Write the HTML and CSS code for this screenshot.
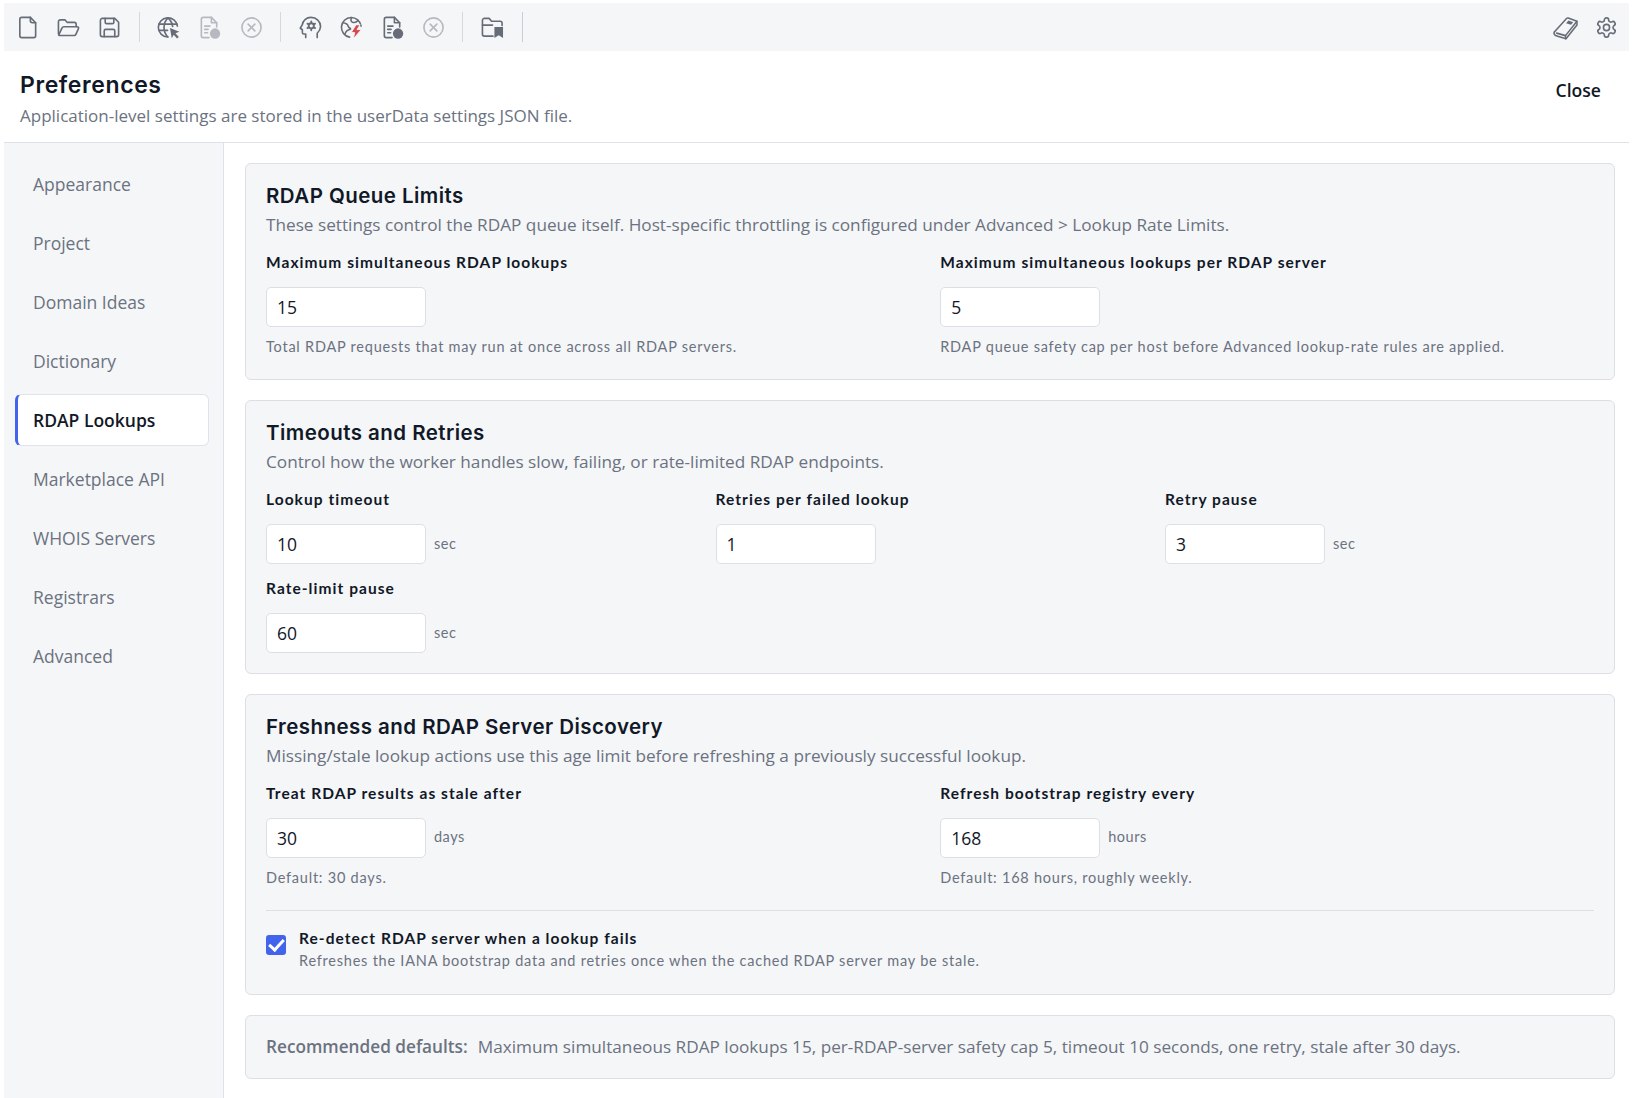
FILE: index.html
```html
<!DOCTYPE html>
<html lang="en">
<head>
<meta charset="utf-8">
<title>Preferences</title>
<link rel="stylesheet" href="styles.css">
</head>
<body>
<div class="app">
  <header class="toolbar">
    <div class="tool-btn"><svg viewBox="0 0 24 24" class="ico"><path d="M6 1.500h9l5.500 5.500v13.500a2 2 0 0 1-2 2H6a2 2 0 0 1-2-2v-17a2 2 0 0 1 2-2z"/><path d="M15 1.500V5a2 2 0 0 0 2 2h3.500"/></svg></div>
    <div class="tool-btn"><svg viewBox="0 0 24 24" class="ico"><path d="M1.500 18.500V6a2 2 0 0 1 2-2h4.700l2.300 2.600h7.500a2 2 0 0 1 2 2V11"/><path d="M1.700 20l3.600-7.700a2 2 0 0 1 1.800-1.100h14c1 0 1.700 1 1.300 1.900l-2.700 6a2 2 0 0 1-1.800 1.200H3.500a2 2 0 0 1-1.800-.3z"/></svg></div>
    <div class="tool-btn"><svg viewBox="0 0 24 24" class="ico"><path d="M4.500 2.500h13l4 4v13a2 2 0 0 1-2 2h-15a2 2 0 0 1-2-2v-15a2 2 0 0 1 2-2z"/><path d="M7.500 2.500v4a1.500 1.500 0 0 0 1.500 1.500h6a1.500 1.500 0 0 0 1.500-1.500v-4"/><path d="M6.500 21.500v-6a1.500 1.500 0 0 1 1.500-1.500h8a1.500 1.500 0 0 1 1.500 1.500v6"/></svg></div>
    <span class="sep"></span>
    <div class="tool-btn"><svg viewBox="0 0 24 24" class="ico"><path d="M21.300 10.500A10 10 0 1 0 11 21.900"/><path d="M2 8.500h19M2.200 15h8.800"/><path d="M11.500 1.900c-5.600 5.300-5.600 14.700 0 20M11.500 1.900c2.900 2.700 4.500 5.800 4.800 9.100"/><path d="M13.500 12.500l9.800 4-4 1.400 3.500 3.900-1.900 1.700-3.400-3.900-2.100 3.500z" class="solid"/></svg></div>
    <div class="tool-btn is-off"><svg viewBox="0 0 24 24" class="ico"><path d="M11.500 22.500H5.500a2 2 0 0 1-2-2v-17a2 2 0 0 1 2-2h8.500l5.500 5.500v4.500"/><path d="M14 1.500V7h5.500M7 10.500h5.500M7 14h3.500M7 17.500h3"/><circle cx="17.800" cy="18.300" r="5.400" class="solid"/></svg></div>
    <div class="tool-btn is-off"><svg viewBox="0 0 24 24" class="ico"><circle cx="12" cy="12" r="10"/><path d="M8.500 8.500l7 7M15.500 8.500l-7 7"/></svg></div>
    <span class="sep"></span>
    <div class="tool-btn"><svg viewBox="0 0 24 24" class="ico"><path d="M7 22.500v-3.700H5a1.500 1.500 0 0 1-1.500-1.500v-3L1.300 12.800 3.500 9C4 4.800 7.500 1.500 12.500 1.500c5.700 0 10 4.200 10 9.500 0 3.300-1.800 5.300-3.500 7v4.500"/><circle cx="12.800" cy="10.300" r="2.700" class="thick"/><path d="M12.800 5.700v1.500M12.800 13.400v1.500M8.800 8l1.300.7M15.500 11.900l1.300.7M8.800 12.600l1.300-.7M15.500 8.700l1.300-.7" class="thick"/></svg></div>
    <div class="tool-btn"><svg viewBox="0 0 24 24" class="ico"><path d="M22 10.500A10.300 10.300 0 1 0 10 22"/><path d="M2.800 7c3.200.3 5.300 1.200 5.700 3.500.3 1.800 2 1.500 2.600 3-1 1-3.500 1-4.700 2.800-.5.800-1 2-1.400 2.900"/><path d="M12 1.800c-1 1.900-.7 4 1 4.700 2 .6 4.200 0 5.800-1.800"/><path d="M16.500 9.500l-4.800 7.800h3.600l-1.500 6.700 8.500-9.800h-4.500l3-4.700z" class="bolt"/></svg></div>
    <div class="tool-btn"><svg viewBox="0 0 24 24" class="ico"><path d="M11.500 22.500H5.500a2 2 0 0 1-2-2v-17a2 2 0 0 1 2-2h8.500l5.500 5.500v4.500"/><path d="M14 1.500V7h5.500M7 10.500h5.500M7 14h3.500M7 17.500h3"/><circle cx="17.800" cy="18.300" r="5.400" class="solid"/></svg></div>
    <div class="tool-btn is-off"><svg viewBox="0 0 24 24" class="ico"><circle cx="12" cy="12" r="10"/><path d="M8.500 8.500l7 7M15.500 8.500l-7 7"/></svg></div>
    <span class="sep"></span>
    <div class="tool-btn"><svg viewBox="0 0 24 24" class="ico"><path d="M12.500 21H3.500a2 2 0 0 1-2-2V4.500a2 2 0 0 1 2-2h5l2.500 3h9a2 2 0 0 1 2 2V10"/><path d="M1.500 9.500H12"/><path d="M14 11.500h9v11.500l-4.500-3-4.500 3z" class="solid"/></svg></div>
    <span class="sep sep-strong"></span>
    <div class="toolbar-end">
      <div class="tool-btn"><svg viewBox="0 0 24 24" class="ico book"><path d="M1.500 16L13 3.300a1.500 1.500 0 0 1 1.600-.4L23 6 12 19.800l-8.500-2.400"/><path d="M23 6v3.500L12.500 22.800l-8.800-2.600c-2.500-.7-3.400-2.800-2.200-4.200"/><path d="M12 19.800v3"/><path d="M12.500 7.800l2.400-2.500 4.500 1.600-2.100 2.500z" class="solid"/></svg></div>
      <div class="tool-btn"><svg viewBox="0 0 24 24" class="ico"><path d="M12.220 2h-.44a2 2 0 0 0-2 2v.18a2 2 0 0 1-1 1.730l-.43.250a2 2 0 0 1-2 0l-.15-.08a2 2 0 0 0-2.730.730l-.22.380a2 2 0 0 0 .730 2.730l.15.100a2 2 0 0 1 1 1.720v.510a2 2 0 0 1-1 1.740l-.15.090a2 2 0 0 0-.730 2.730l.22.380a2 2 0 0 0 2.730.730l.15-.08a2 2 0 0 1 2 0l.43.250a2 2 0 0 1 1 1.730V20a2 2 0 0 0 2 2h.44a2 2 0 0 0 2-2v-.18a2 2 0 0 1 1-1.730l.43-.25a2 2 0 0 1 2 0l.15.08a2 2 0 0 0 2.730-.730l.22-.39a2 2 0 0 0-.730-2.730l-.15-.08a2 2 0 0 1-1-1.740v-.5a2 2 0 0 1 1-1.740l.15-.09a2 2 0 0 0 .730-2.730l-.22-.38a2 2 0 0 0-2.730-.730l-.15.08a2 2 0 0 1-2 0l-.43-.25a2 2 0 0 1-1-1.730V4a2 2 0 0 0-2-2z"/><circle cx="12" cy="12" r="3.200"/></svg></div>
    </div>
  </header>

  <div class="page-head">
    <div>
      <h1 class="page-title">Preferences</h1>
      <p class="page-sub">Application-level settings are stored in the userData settings JSON file.</p>
    </div>
    <div class="close-btn">Close</div>
  </div>

  <div class="main">
    <nav class="side">
      <div class="side-item">Appearance</div>
      <div class="side-item">Project</div>
      <div class="side-item">Domain Ideas</div>
      <div class="side-item">Dictionary</div>
      <div class="side-item active">RDAP Lookups</div>
      <div class="side-item">Marketplace API</div>
      <div class="side-item">WHOIS Servers</div>
      <div class="side-item">Registrars</div>
      <div class="side-item">Advanced</div>
    </nav>
    <main class="content">
      <section class="card">
        <h2 class="card-title">RDAP Queue Limits</h2>
        <p class="card-desc">These settings control the RDAP queue itself. Host-specific throttling is configured under Advanced &gt; Lookup Rate Limits.</p>
        <div class="grid two">
          <div class="field">
            <div class="label">Maximum simultaneous RDAP lookups</div>
            <div class="input-row"><input class="num" value="15"></div>
            <div class="help">Total RDAP requests that may run at once across all RDAP servers.</div>
          </div>
          <div class="field">
            <div class="label">Maximum simultaneous lookups per RDAP server</div>
            <div class="input-row"><input class="num" value="5"></div>
            <div class="help">RDAP queue safety cap per host before Advanced lookup-rate rules are applied.</div>
          </div>
        </div>
      </section>

      <section class="card">
        <h2 class="card-title">Timeouts and Retries</h2>
        <p class="card-desc">Control how the worker handles slow, failing, or rate-limited RDAP endpoints.</p>
        <div class="grid three">
          <div class="field">
            <div class="label">Lookup timeout</div>
            <div class="input-row"><input class="num" value="10"><span class="unit">sec</span></div>
          </div>
          <div class="field">
            <div class="label">Retries per failed lookup</div>
            <div class="input-row"><input class="num" value="1"></div>
          </div>
          <div class="field">
            <div class="label">Retry pause</div>
            <div class="input-row"><input class="num" value="3"><span class="unit">sec</span></div>
          </div>
          <div class="field">
            <div class="label">Rate-limit pause</div>
            <div class="input-row"><input class="num" value="60"><span class="unit">sec</span></div>
          </div>
        </div>
      </section>

      <section class="card">
        <h2 class="card-title">Freshness and RDAP Server Discovery</h2>
        <p class="card-desc">Missing/stale lookup actions use this age limit before refreshing a previously successful lookup.</p>
        <div class="grid two tight">
          <div class="field">
            <div class="label">Treat RDAP results as stale after</div>
            <div class="input-row"><input class="num" value="30"><span class="unit">days</span></div>
            <div class="help">Default: 30 days.</div>
          </div>
          <div class="field">
            <div class="label">Refresh bootstrap registry every</div>
            <div class="input-row"><input class="num" value="168"><span class="unit">hours</span></div>
            <div class="help">Default: 168 hours, roughly weekly.</div>
          </div>
        </div>
        <div class="check-row">
          <input type="checkbox" class="check" checked>
          <div>
            <div class="label">Re-detect RDAP server when a lookup fails</div>
            <div class="help">Refreshes the IANA bootstrap data and retries once when the cached RDAP server may be stale.</div>
          </div>
        </div>
      </section>

      <section class="card card-note">
        <strong>Recommended defaults:</strong><span>Maximum simultaneous RDAP lookups 15, per-RDAP-server safety cap 5, timeout 10 seconds, one retry, stale after 30 days.</span>
      </section>
    </main>
  </div>
</div>
</body>
</html>
```
FILE: styles.css
```css
* { box-sizing: border-box; }
html, body { margin: 0; height: 100%; background: #fff; }
body { font-family: "Open Sans", "Liberation Sans", sans-serif; color: #111827; overflow: hidden; }
.app { height: 1098px; margin: 0 4px 0 4px; padding-top: 3px; display: flex; flex-direction: column; }

.toolbar { height: 48px; flex: none; background: #f5f6f8; display: flex; align-items: center; padding: 0 2px 0 3px; }
.tool-btn { width: 41.100px; height: 48px; display: flex; align-items: center; justify-content: center; flex: none; }
.ico { width: 23px; height: 23px; fill: none; stroke: #676d78; stroke-width: 1.700; stroke-linecap: round; stroke-linejoin: round; }
.ico .solid { fill: #676d78; stroke: none; }
.ico .bolt { fill: #d9484d; stroke: #f5f6f8; stroke-width: 1; }
.ico .thick { stroke-width: 1.900; }
.ico.book { width: 25px; height: 25px; stroke-width: 1.500; }
.is-off .ico { stroke: #b6b9bf; }
.is-off .ico .solid { fill: #b6b9bf; }
.sep { width: 1px; height: 30px; margin: 0 8.500px; background: #d5d8dd; flex: none; }
.sep-strong { background: #c9ced6; }
.toolbar-end { margin-left: auto; display: flex; }

.page-head { height: 92px; flex: none; display: flex; justify-content: space-between; align-items: flex-start; padding: 19px 28px 0 16px; border-bottom: 1px solid #dde1e8; }
.page-title { margin: 0; font-family: Inter, "Liberation Sans", sans-serif; font-size: 23px; line-height: 30px; font-weight: 600; letter-spacing: .6px; color: #111827; }
.page-sub { margin: 4px 0 0; font-size: 17px; line-height: 24px; color: #6b7280; }
.close-btn { margin-top: 8px; font-size: 17.600px; line-height: 24px; font-weight: 600; color: #111827; }

.main { flex: 1; display: flex; min-height: 0; }
.side { width: 220px; flex: none; background: #f5f6f8; border-right: 1px solid #dde1e8; padding: 15px 14px 0 11px; display: flex; flex-direction: column; gap: 7px; }
.side-item { height: 52px; flex: none; display: flex; align-items: center; padding-left: 15px; font-size: 17.500px; color: #6b7280; border: 1px solid transparent; border-left-width: 3px; border-radius: 6px; }
.side-item.active { background: #fff; border-color: #dfe3ec; border-left-color: #4263eb; color: #111827; font-weight: 600; }

.content { flex: 1; min-width: 0; padding: 20px 14.500px 0 21px; display: flex; flex-direction: column; gap: 20px; }
.card { background: #f5f6f8; border: 1px solid #dcdfe6; border-radius: 6px; padding: 18px 20px 20px; }
.card-title { margin: 0; font-family: Inter, "Liberation Sans", sans-serif; font-size: 20.500px; line-height: 28px; font-weight: 600; letter-spacing: .45px; color: #111827; }
.card-desc { margin: 1px 0 0; font-size: 17.200px; line-height: 28px; color: #6b7280; }
.grid { display: grid; column-gap: 21px; margin-top: 11px; }
.grid.two { grid-template-columns: 1fr 1fr; }
.grid.three { grid-template-columns: 1fr 1fr 1fr; row-gap: 12px; }
.label { font-family: Lato, "Liberation Sans", sans-serif; font-size: 15.500px; line-height: 24px; font-weight: 700; letter-spacing: 1.050px; color: #111827; }
.input-row { display: flex; align-items: center; gap: 8px; margin-top: 13px; }
.tight .input-row { margin-top: 12.500px; }
.num { width: 160px; height: 40px; border: 1px solid #dcdfe6; border-radius: 5px; background: #fff; padding: 0 10px; font: 17.500px "Open Sans", sans-serif; color: #111827; outline: none; }
.unit { font-family: Lato, "Liberation Sans", sans-serif; font-size: 14.500px; color: #6b7280; letter-spacing: .5px; margin-top: -2px; }
.help { font-family: Lato, "Liberation Sans", sans-serif; font-size: 14.500px; line-height: 20px; color: #6b7280; letter-spacing: .77px; margin: 10px 0 2px; }

.check-row { border-top: 1px solid #dcdfe6; display: flex; gap: 13px; align-items: flex-start; padding: 15px 0 2px; margin-top: 20px; }
.check-row .help { margin: 0; line-height: 22px; }
.check { appearance: none; margin: 9px 0 0; width: 20px; height: 20px; flex: none; border-radius: 3px; background: #4263eb; display: grid; place-items: center; }
.check::after { content: ""; width: 6px; height: 12px; margin-top: -3px; border: solid #fff; border-width: 0 3px 3px 0; transform: rotate(42deg); }

.card-note { height: 64px; flex: none; padding: 0 20px; display: flex; align-items: center; gap: 10px; font-size: 17.200px; color: #6b7280; }
.card-note strong { font-weight: 600; }
```
